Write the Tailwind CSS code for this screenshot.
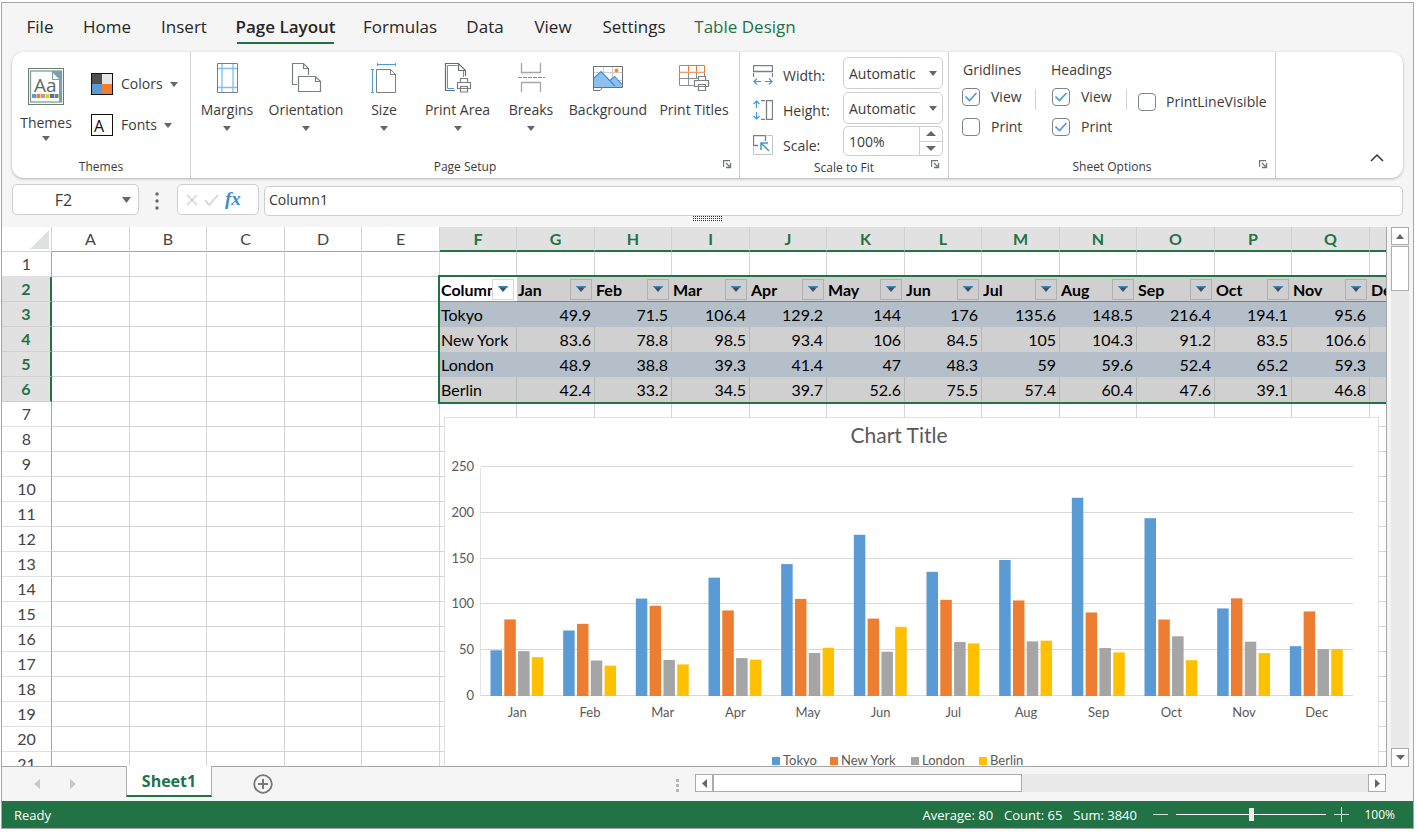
<!DOCTYPE html>
<html lang="en">
<head>
<meta charset="utf-8">
<title>Spreadsheet – Page Layout</title>
<script src="https://cdn.jsdelivr.net/npm/@tailwindcss/browser@4"></script>
</head>
<body class="bg-white font-['Open_Sans',sans-serif] text-[#3b3b3b]">
<div class="h-screen pt-0.5 pr-1 pb-[3px] pl-px">
<div class="flex h-full flex-col overflow-hidden border border-[#a6a6a6] bg-[#f5f5f5]">

  <!-- Ribbon tabs -->
  <nav class="flex h-[49px] shrink-0 items-start gap-[30px] pt-2 pl-[25px] text-[17px] leading-8 text-[#262626]">
    <button class="flex w-[26px] justify-center whitespace-nowrap">File</button>
    <button class="flex w-12 justify-center whitespace-nowrap">Home</button>
    <button class="flex w-[46px] justify-center whitespace-nowrap">Insert</button>
    <button class="flex h-[33px] w-[97px] justify-center border-b-2 border-[#217346] font-semibold whitespace-nowrap">Page Layout</button>
    <button class="flex w-[72px] justify-center whitespace-nowrap">Formulas</button>
    <button class="flex w-[38px] justify-center whitespace-nowrap">Data</button>
    <button class="flex w-[38px] justify-center whitespace-nowrap">View</button>
    <button class="flex w-[64px] justify-center whitespace-nowrap">Settings</button>
    <button class="flex w-[98px] justify-center whitespace-nowrap text-[#217346]">Table Design</button>
  </nav>

  <!-- Ribbon -->
  <div class="mr-[10px] ml-[10px] flex h-[126px] shrink-0 rounded-xl bg-white text-sm leading-5 shadow-[0_1px_3px_rgba(0,0,0,0.28)]">
    <!-- Themes -->
    <section class="flex w-[179px] shrink-0 flex-col border-r border-[#d2d2d2]">
      <div class="flex flex-1 pt-4 pl-1">
        <button class="flex w-[60px] flex-col items-center">
          <svg width="36" height="37" viewBox="0 0 36 37"><rect x=".5" y=".5" width="35" height="36" fill="#fff" stroke="#6f7b7b"/><rect x="2.500" y="3" width="31" height="31" fill="#fff" stroke="#7fa08c" stroke-width="1.300"/><path d="M24 3h10v31h-3V12h-7z" fill="#7d9db5"/><path d="M24.500 4v7.500H32z" fill="#fff" stroke="#7d9db5"/><text x="6" y="24" font-family="Open Sans" font-size="19" fill="#5c6666">Aa</text><path d="M4 26h4v4H4z" fill="#5b9bd5"/><path d="M8.500 26h4v4h-4z" fill="#ed7d31"/><path d="M13 26h4v4h-4z" fill="#a5a5a5"/><path d="M17.500 26h4v4h-4z" fill="#ffc000"/><path d="M22 26h4v4h-4z" fill="#4472c4"/><path d="M26.500 26h4v4h-4z" fill="#5f8f6f"/></svg>
          <span class="mt-2 whitespace-nowrap">Themes</span>
          <svg class="mt-[3px]" width="8" height="5"><path d="M0 0h8L4 5z" fill="#666"/></svg>
        </button>
        <div class="ml-[15px] flex flex-col gap-[17px] pt-1">
          <button class="flex h-6 items-center"><svg width="22" height="22"><path d="M1 1h10v10H1z" fill="#505050"/><path d="M11 1h10v10H11z" fill="#e7e6e6"/><path d="M1 11h10v10H1z" fill="#5b9bd5"/><path d="M11 11h10v10H11z" fill="#ed7d31"/><rect x=".5" y=".5" width="21" height="21" fill="none" stroke="#111"/></svg><span class="ml-2">Colors</span><svg class="ml-[7px]" width="8" height="5"><path d="M0 0h8L4 5z" fill="#666"/></svg></button>
          <button class="flex h-6 items-center"><svg width="22" height="22"><rect x=".5" y=".5" width="21" height="21" fill="#fff" stroke="#111"/><text x="3" y="18" font-family="Open Sans" font-size="16" fill="#111">A</text></svg><span class="ml-2">Fonts</span><svg class="ml-[7px]" width="8" height="5"><path d="M0 0h8L4 5z" fill="#666"/></svg></button>
        </div>
      </div>
      <h2 class="pb-px text-center text-xs leading-5">Themes</h2>
    </section>

    <!-- Page Setup -->
    <section class="flex w-[549px] shrink-0 flex-col border-r border-[#d2d2d2]">
      <div class="flex flex-1 pt-[10px] pl-[5px]">
        <button class="flex w-[62px] flex-col items-center">
          <svg width="32" height="32" fill="none"><path d="M6.500 1.500h20v29h-20z" stroke="#7a7f82"/><path d="M11 2v28M22 2v28M7 6.500h19M7 25.500h19" stroke="#7cc0ee" stroke-width="1.300"/></svg>
          <span class="mt-1.5 whitespace-nowrap">Margins</span><svg class="mt-1.5" width="8" height="5"><path d="M0 0h8L4 5z" fill="#666"/></svg>
        </button>
        <button class="flex w-24 flex-col items-center">
          <svg width="32" height="32" fill="none" stroke="#7a7f82" stroke-width="1.200"><path d="M7 22.500H2.500v-21h11l5 5V13M13.500 1.500v5h5"/><path d="M8.500 14.500h17l5 5v10h-22zM25.500 14.500v5h5"/></svg>
          <span class="mt-1.5 whitespace-nowrap">Orientation</span><svg class="mt-1.5" width="8" height="5"><path d="M0 0h8L4 5z" fill="#666"/></svg>
        </button>
        <button class="flex w-[60px] flex-col items-center">
          <svg width="32" height="32" fill="none"><path d="M8.500 7.500h14l5 5v18h-19zM22.500 7.500v5h5" stroke="#7a7f82"/><path d="M9 2.500h18M9.500 1v3M27.500 1v3M4.500 7v23M3 7.500h3M3 30.500h3" stroke="#4a9bdc"/></svg>
          <span class="mt-1.5 whitespace-nowrap">Size</span><svg class="mt-1.5" width="8" height="5"><path d="M0 0h8L4 5z" fill="#666"/></svg>
        </button>
        <button class="flex w-[87px] flex-col items-center">
          <svg width="32" height="32" fill="none"><path d="M13 28.500H3.500v-27h13l7 7V14M16.500 1.500v7h7" stroke="#666c70" stroke-width="1.200"/><path d="M12 26.500H5.500v-23h10M21.500 9v6" stroke="#4a9bdc"/><path d="M18.500 20v-3.500h7V20M15.500 20.500h13v6h-13zM18.500 24.500h7v5.500h-7z" fill="#fff" stroke="#7a7f82" stroke-width="1.200"/></svg>
          <span class="mt-1.5 whitespace-nowrap">Print Area</span><svg class="mt-1.5" width="8" height="5"><path d="M0 0h8L4 5z" fill="#666"/></svg>
        </button>
        <button class="flex w-[60px] flex-col items-center">
          <svg width="32" height="32" fill="none"><path d="M6.500 1v9.500h19V1M6.500 30v-9.500h19V30" stroke="#a6a6a6" stroke-width="1.300"/><path d="M3 15.500h27" stroke="#4a9bdc" stroke-dasharray="4 1"/></svg>
          <span class="mt-1.5 whitespace-nowrap">Breaks</span><svg class="mt-1.5" width="8" height="5"><path d="M0 0h8L4 5z" fill="#666"/></svg>
        </button>
        <button class="flex w-[94px] flex-col items-center">
          <svg width="32" height="32" fill="none"><path d="M11.500 4v20M20.500 4v20M2 10.500h28M2 18.500h28" stroke="#ccc"/><path d="M2 16l7-6.500 9 9 4-3.500 8 8.500v1.500H2z" fill="#8dc0ec"/><path d="M2 16l7-6.500L23 24M18 18.500l4.500-4 7.500 8" stroke="#3f8fd0" stroke-width="1.200"/><circle cx="24.500" cy="8.500" r="2" fill="#f58a1f"/><path d="M1.500 28.500v-24h29v21h-20l-2.500 3h-6.500z M1.500 25.500h9" stroke="#6b7075"/></svg>
          <span class="mt-1.5 whitespace-nowrap">Background</span>
        </button>
        <button class="flex w-[78px] flex-col items-center">
          <svg width="32" height="32" fill="none"><path d="M1.500 11v12.500h14M2 16.500h18M10.500 11v12M18.500 11v6M26.500 11v3" stroke="#8a8f92"/><path d="M1.500 3.500h25v7h-25zM10.500 3.500v7M18.500 3.500v7" stroke="#e8762c"/><path d="M2 10h24" stroke="#f5c6a4"/><path d="M20.500 18v-3.500h7V18M16.500 18.500h14v6h-14zM20.500 22.500h7v6h-7z" fill="#fff" stroke="#7a7f82" stroke-width="1.200"/></svg>
          <span class="mt-1.5 whitespace-nowrap">Print Titles</span>
        </button>
      </div>
      <div class="grid grid-cols-[1fr_auto_1fr] items-start pb-px">
        <span></span><h2 class="text-xs leading-5">Page Setup</h2>
        <button class="mt-[3px] mr-[7px] justify-self-end" aria-label="Page Setup options"><svg width="9" height="9" fill="none" stroke="#6c7575"><path d="M.5 7V.5H7M3 3l3.500 3.500M7.500 3v4.500H3" stroke-width="1.300"/></svg></button>
      </div>
    </section>

    <!-- Scale to Fit -->
    <section class="flex w-[209px] shrink-0 flex-col border-r border-[#d2d2d2]">
      <div class="flex flex-1 flex-col gap-[3px] pt-[5px] pl-[13px]">
        <div class="flex h-8 items-center">
          <svg class="mt-1" width="20" height="20" fill="none"><path d="M.5.500h19v6H.5zM.5 8v4M19.500 8v4" stroke="#7a7f82" stroke-width="1.300"/><path d="M1 16.500h7M4 13.500l-3 3 3 3M12 16.500h7M16 13.500l3 3-3 3" stroke="#3f97dc" stroke-width="1.200"/></svg>
          <label for="w" class="mt-1.5 ml-[10px] w-[60px]">Width:</label>
          <span class="relative"><select id="w" class="h-8 w-[100px] appearance-none rounded-[5px] border border-[#cfcfcf] bg-white pt-px pl-[5px]"><option>Automatic</option></select><svg class="pointer-events-none absolute top-3.5 right-1.5" width="8" height="5"><path d="M0 0h8L4 5z" fill="#666"/></svg></span>
        </div>
        <div class="flex h-8 items-center">
          <svg class="mt-1" width="20" height="20" fill="none"><path d="M13.500.500h6v19h-6zM8 .500h4M8 19.500h4" stroke="#7a7f82" stroke-width="1.300"/><path d="M3.500 1v7M.5 4l3-3 3 3M3.500 12v7M.5 16l3 3 3-3" stroke="#3f97dc" stroke-width="1.200"/></svg>
          <label for="h" class="mt-1.5 ml-[10px] w-[60px]">Height:</label>
          <span class="relative"><select id="h" class="h-8 w-[100px] appearance-none rounded-[5px] border border-[#cfcfcf] bg-white pt-px pl-[5px]"><option>Automatic</option></select><svg class="pointer-events-none absolute top-3.5 right-1.5" width="8" height="5"><path d="M0 0h8L4 5z" fill="#666"/></svg></span>
        </div>
        <div class="flex items-center">
          <svg class="mt-1.5" width="20" height="20" fill="none"><path d="M5 10.500H.5V.500h12V6" stroke="#7a7f82" stroke-width="1.300"/><path d="M.5 12v7.500h19V.500H14" stroke="#c4c4c4"/><path d="M16 16L8 8M8 15V8h7" stroke="#3f97dc" stroke-width="1.500"/></svg>
          <label for="s" class="mt-2 ml-[10px] w-[60px]">Scale:</label>
          <div class="-mt-px flex h-[30px] w-[100px] rounded-[5px] border border-[#cfcfcf]">
            <input id="s" value="100%" class="w-[75px] min-w-0 rounded-[5px] pt-0.5 pl-[5px] outline-none">
            <div class="flex flex-1 flex-col border-l border-[#cfcfcf]">
              <button class="flex flex-1 items-center justify-center border-b border-[#cfcfcf]" aria-label="Increase"><svg width="10" height="5"><path d="M0 5h10L5 0z" fill="#666"/></svg></button>
              <button class="flex flex-1 items-center justify-center" aria-label="Decrease"><svg width="10" height="5"><path d="M0 0h10L5 5z" fill="#666"/></svg></button>
            </div>
          </div>
        </div>
      </div>
      <div class="grid grid-cols-[1fr_auto_1fr] items-start">
        <span></span><h2 class="text-xs leading-5">Scale to Fit</h2>
        <button class="mt-0.5 mr-2 justify-self-end" aria-label="Scale to Fit options"><svg width="9" height="9" fill="none" stroke="#6c7575"><path d="M.5 7V.5H7M3 3l3.500 3.500M7.500 3v4.500H3" stroke-width="1.300"/></svg></button>
      </div>
    </section>

    <!-- Sheet Options -->
    <section class="flex w-[327px] shrink-0 flex-col border-r border-[#d2d2d2]">
      <div class="flex flex-1 pt-2 pl-[13px]">
        <fieldset class="w-[73px]"><legend class="pl-px">Gridlines</legend>
          <label class="mt-[7px] flex h-5 items-center gap-[11px]"><span class="relative flex"><input type="checkbox" checked class="peer size-[18px] appearance-none rounded border-[1.5px] border-[#7d8484] bg-white"><svg class="pointer-events-none absolute inset-0 hidden peer-checked:block" width="18" height="18" fill="none"><path d="M3.500 8.500l4 4 7-7.500" stroke="#4a96d6" stroke-width="1.600"/></svg></span>View</label>
          <label class="mt-[10px] flex h-5 items-center gap-[11px]"><input type="checkbox" class="size-[18px] appearance-none rounded border-[1.5px] border-[#7d8484] bg-white">Print</label>
        </fieldset>
        <div class="mt-[29px] h-[21px] w-px bg-[#d2d2d2]"></div>
        <fieldset class="ml-[15px] w-[75px]"><legend>Headings</legend>
          <label class="mt-[7px] flex h-5 items-center gap-[11px] pl-px"><span class="relative flex"><input type="checkbox" checked class="peer size-[18px] appearance-none rounded border-[1.5px] border-[#7d8484] bg-white"><svg class="pointer-events-none absolute inset-0 hidden peer-checked:block" width="18" height="18" fill="none"><path d="M3.500 8.500l4 4 7-7.500" stroke="#4a96d6" stroke-width="1.600"/></svg></span>View</label>
          <label class="mt-[10px] flex h-5 items-center gap-[11px] pl-px"><span class="relative flex"><input type="checkbox" checked class="peer size-[18px] appearance-none rounded border-[1.5px] border-[#7d8484] bg-white"><svg class="pointer-events-none absolute inset-0 hidden peer-checked:block" width="18" height="18" fill="none"><path d="M3.500 8.500l4 4 7-7.500" stroke="#4a96d6" stroke-width="1.600"/></svg></span>Print</label>
        </fieldset>
        <div class="mt-[29px] h-[21px] w-px bg-[#d2d2d2]"></div>
        <label class="mt-8 ml-[11px] flex h-5 items-center gap-[10px] whitespace-nowrap"><input type="checkbox" class="size-[18px] shrink-0 appearance-none rounded border-[1.5px] border-[#7d8484] bg-white">PrintLineVisible</label>
      </div>
      <div class="grid grid-cols-[1fr_auto_1fr] items-start pb-px">
        <span></span><h2 class="text-xs leading-5">Sheet Options</h2>
        <button class="mt-[3px] mr-[7px] justify-self-end" aria-label="Sheet options"><svg width="9" height="9" fill="none" stroke="#6c7575"><path d="M.5 7V.5H7M3 3l3.500 3.500M7.500 3v4.500H3" stroke-width="1.300"/></svg></button>
      </div>
    </section>
    <button class="mr-[19px] mb-4 ml-auto self-end" aria-label="Collapse ribbon"><svg width="14" height="9" fill="none"><path d="M1 8l6-6 6 6" stroke="#333" stroke-width="1.500"/></svg></button>
  </div>

  <!-- Formula bar -->
  <div class="flex h-[38px] shrink-0 items-start pt-1.5 pr-[10px] pl-[10px]">
    <div class="relative"><input aria-label="Name box" value="F2" class="block h-[31px] w-[127px] rounded-[5px] border border-[#cfcfcf] bg-white pt-px pr-6 text-center text-base outline-none"><svg class="absolute top-[13px] right-2" width="9" height="6"><path d="M0 0h9L4.500 6z" fill="#666"/></svg></div>
    <svg class="mt-2 ml-4" width="4" height="18" fill="#666"><circle cx="2" cy="2" r="1.700"/><circle cx="2" cy="9" r="1.700"/><circle cx="2" cy="16" r="1.700"/></svg>
    <div class="ml-[18px] flex h-[31px] w-[82px] items-center rounded-[5px] border border-[#cfcfcf] bg-white pl-2">
      <button aria-label="Cancel"><svg width="12" height="12"><path d="M1 1l10 10M11 1L1 11" stroke="#d4d4d4" stroke-width="1.500"/></svg></button>
      <button class="ml-[6px]" aria-label="Enter"><svg width="15" height="12" fill="none"><path d="M1 6l4 5 9-10" stroke="#d4d4d4" stroke-width="1.800"/></svg></button>
      <button class="ml-1.5 pb-0.5 font-['Liberation_Serif',serif] text-[19px] leading-6 font-bold text-[#3f8ccb] italic">fx</button>
    </div>
    <input aria-label="Formula" value="Column1" class="mt-0.5 ml-[5px] h-[30px] min-w-0 flex-1 rounded-[5px] border border-[#cfcfcf] bg-white pb-1 pl-1 text-sm text-[#333] outline-none">
  </div>
  <div class="flex h-[11px] shrink-0 justify-center"><svg width="30" height="5"><path d="M0 .5h30M0 2.500h30M0 4.500h30" stroke="#333" stroke-dasharray="1 1"/></svg></div>

  <!-- Sheet area -->
  <div class="flex min-h-0 flex-1 font-[Lato,sans-serif]">
    <main class="relative min-w-0 flex-1 overflow-hidden border-r border-b border-[#a6a6a6] bg-white">
      <table id="grid" class="w-[1445px] table-fixed border-separate border-spacing-0 text-base leading-6 text-black"></table>
      <div class="absolute top-12 left-[436px] h-[129px] w-[1000px] border-2 border-[#217346]"></div>
      <figure class="absolute top-[190px] left-[442px] w-[935px] border border-[#e0e0e0] bg-white">
        <svg id="chart" class="block" width="933" height="380" font-family="Lato, sans-serif" font-size="13" fill="#595959"></svg>
      </figure>
    </main>
    <div class="mr-1 ml-1 flex w-[18px] flex-col bg-[#e9e9e9]">
      <button class="flex h-[18px] items-center justify-center border border-[#ababab] bg-white" aria-label="Scroll up"><svg width="8" height="5"><path d="M0 5h8L4 0z" fill="#666"/></svg></button>
      <div class="mt-px h-[45px] border border-[#ababab] bg-white"></div>
      <button class="mt-auto flex h-[19px] items-center justify-center border border-[#ababab] bg-white" aria-label="Scroll down"><svg width="9" height="5"><path d="M0 0h9L4.500 5z" fill="#666"/></svg></button>
    </div>
  </div>

  <!-- Sheet tabs and horizontal scrollbar -->
  <div class="flex h-[34px] shrink-0 items-start pr-[27px] pl-[32px]">
    <button class="mt-3" aria-label="Previous sheet"><svg width="6" height="10"><path d="M6 0v10L0 5z" fill="#c8c8c8"/></svg></button>
    <button class="mt-3 ml-[30px]" aria-label="Next sheet"><svg width="6" height="10"><path d="M0 0v10l6-5z" fill="#c8c8c8"/></svg></button>
    <button class="relative -mt-px ml-[50px] h-[31px] w-[86px] border-x border-b-2 border-x-[#ababab] border-b-[#217346] bg-white font-['Open_Sans',sans-serif] text-base leading-7 font-bold text-[#217346]">Sheet1</button>
    <button class="mt-[7px] ml-[41px]" aria-label="New sheet"><svg width="20" height="20" fill="none" stroke="#777" stroke-width="1.800"><circle cx="10" cy="10" r="8.800"/><path d="M10 5v10M5 10h10" stroke-width="2"/></svg></button>
    <svg class="mt-3 ml-auto" width="3" height="13" fill="#b5b5b5"><path d="M0 0h3v3H0zM0 5h3v3H0zM0 10h3v3H0z"/></svg>
    <div class="mt-[7px] ml-[16px] flex h-[18px] w-[691px] bg-[#e9e9e9]">
      <button class="flex w-[18px] items-center justify-center border border-[#ababab] bg-white" aria-label="Scroll left"><svg width="5" height="9"><path d="M5 0v9L0 4.500z" fill="#666"/></svg></button>
      <div class="w-[309px] border border-[#ababab] bg-white"></div>
      <button class="ml-auto flex w-[18px] items-center justify-center border border-[#ababab] bg-white" aria-label="Scroll right"><svg width="5" height="9"><path d="M0 0v9l5-4.500z" fill="#666"/></svg></button>
    </div>
  </div>

  <!-- Status bar -->
  <footer class="flex h-[27px] shrink-0 items-center bg-[#217346] pr-[18px] pl-3 text-[13px] leading-6 text-white">
    <span class="mr-auto">Ready</span>
    <span>Average: 80</span><span class="ml-[11px]">Count: 65</span><span class="ml-[11px]">Sum: 3840</span>
    <button class="ml-4" aria-label="Zoom out"><svg width="15" height="15"><path d="M0 7.500h15" stroke="#cfe0d6"/></svg></button>
    <input type="range" aria-label="Zoom" class="ml-2 h-3.5 w-[150px] appearance-none bg-[linear-gradient(white,white)] bg-[length:100%_1px] bg-center bg-no-repeat [&::-webkit-slider-thumb]:h-[13px] [&::-webkit-slider-thumb]:w-[5px] [&::-webkit-slider-thumb]:appearance-none [&::-webkit-slider-thumb]:bg-[#eee]">
    <button class="ml-2" aria-label="Zoom in"><svg width="15" height="15"><path d="M0 7.500h15M7.500 0v15" stroke="#cfe0d6"/></svg></button>
    <span class="ml-[14px] w-8 text-right text-xs leading-6">100%</span>
  </footer>
</div>
</div>

<script>
const months = ['Jan','Feb','Mar','Apr','May','Jun','Jul','Aug','Sep','Oct','Nov','Dec'];
const data = [
  ['Tokyo', '#5b9bd5', [49.9,71.5,106.4,129.2,144,176,135.6,148.5,216.4,194.1,95.6,54.4]],
  ['New York', '#ed7d31', [83.6,78.8,98.5,93.4,106,84.5,105,104.3,91.2,83.5,106.6,92.3]],
  ['London', '#a5a5a5', [48.9,38.8,39.3,41.4,47,48.3,59,59.6,52.4,65.2,59.3,51.2]],
  ['Berlin', '#ffc000', [42.4,33.2,34.5,39.7,52.6,75.5,57.4,60.4,47.6,39.1,46.8,51.1]]
];
const letters = 'ABCDEFGHIJKLMNOPQR'.split('');

let html = '<colgroup><col class="w-[50px]">' + letters.map((l, i) => i % 2 ? '<col class="w-[77px]">' : '<col class="w-[78px]">').join('') + '</colgroup><thead><tr>';
html += '<th class="h-[25px] border-r border-b border-[#d4d4d4] p-0"><svg class="ml-auto mr-0.5" width="19" height="19"><path d="M19 0v19H0z" fill="#dfe1e1"/></svg></th>';
letters.forEach((l, i) => {
  html += i < 5
    ? '<th scope="col" class="h-[25px] border-r border-b border-r-[#d4d4d4] border-b-[#a6a6a6] p-0 font-normal text-[#444]">' + l + '</th>'
    : '<th scope="col" class="h-[25px] border-r border-b-2 border-r-[#d0d0d0] border-b-[#217346] bg-[#e1e1e1] p-0 font-bold leading-[23px] text-[#217346]">' + l + '</th>';
});
html += '</tr></thead><tbody>';
for (let r = 1; r <= 22; r++) {
  const sel = r >= 2 && r <= 6;
  html += '<tr>' + (sel
    ? '<th scope="row" class="h-[25px] border-r-2 border-b border-r-[#217346] border-b-[#d0d0d0] bg-[#e1e1e1] p-0 font-bold text-[#217346]">' + r + '</th>'
    : '<th scope="row" class="h-[25px] border-r border-b border-r-[#a6a6a6] border-b-[#e0e0e0] p-0 font-normal text-[#444]">' + r + '</th>');
  letters.forEach((l, i) => {
    const c = i - 5;
    if (!sel || c < 0) { html += '<td class="h-[25px] border-r border-b border-[#d4d4d4] p-0"></td>'; return; }
    if (r === 2) {
      const name = c ? months[c - 1] : 'Column1';
      html += (c ? '<td class="h-[25px] border-b border-[#5b86ad] bg-[#d0d0d0] p-0 pl-px font-bold">' : '<td class="h-[25px] border-b border-[#5b9bd5] bg-white p-0 pl-px font-bold">')
        + '<div class="flex h-6 items-center overflow-hidden"><span class="min-w-0 flex-1 overflow-hidden pt-px leading-[23px] whitespace-nowrap">' + name + '</span>'
        + (c ? '<button class="mr-[3px] flex h-[21px] w-[22px] shrink-0 items-center justify-center border border-[#b0b0b0] bg-[#cfcfcf]" aria-label="Filter">' : '<button class="mr-[3px] flex h-[21px] w-[22px] shrink-0 items-center justify-center border border-[#d8d8d8] bg-white" aria-label="Filter">')
        + '<svg width="10" height="6"><path d="M0 0h10L5 6z" fill="#3d4f60"/><path d="M0 0h10v1.500H1z" fill="#3f86c4"/></svg></button></div></td>';
      return;
    }
    const row = data[r - 3], v = c ? row[2][c - 1] : row[0], blue = r % 2;
    html += (c
      ? (blue ? '<td class="h-[25px] border-r border-b border-[#b4bfc9] bg-[#b4bfc9] p-0 pt-px pr-[3px] text-right leading-[23px]">' : '<td class="h-[25px] border-r border-b border-r-[#b3b8bb] border-b-[#d0d0d0] bg-[#d0d0d0] p-0 pt-px pr-[3px] text-right leading-[23px]">')
      : (blue ? '<td class="h-[25px] border-r border-b border-[#b4bfc9] bg-[#b4bfc9] p-0 pt-px pl-px leading-[23px] whitespace-nowrap">' : '<td class="h-[25px] border-r border-b border-r-[#b3b8bb] border-b-[#d0d0d0] bg-[#d0d0d0] p-0 pt-px pl-px leading-[23px] whitespace-nowrap">')) + v + '</td>';
  });
  html += '</tr>';
}
document.getElementById('grid').innerHTML = html + '</tbody>';

// Clustered column chart
const X0 = 36, Y0 = 278, W = 872, H = 229;
let s = '<text x="454" y="25" text-anchor="middle" font-size="21">Chart Title</text>';
for (let v = 0; v <= 250; v += 50) {
  const y = Math.round(Y0 - v / 250 * H) - 0.5;
  s += '<path d="M' + X0 + ' ' + y + 'h' + W + '" stroke="#d9d9d9"/><text x="' + (X0 - 7) + '" y="' + (y + 4) + '" text-anchor="end">' + v + '</text>';
}
s += '<path d="M' + (X0 - 0.5) + ' ' + (Y0 - H) + 'v' + H + '" stroke="#e3e3e3"/>';
months.forEach((m, i) => {
  const cx = X0 + i * W / 12;
  data.forEach((d, k) => {
    const h = d[2][i] / 250 * H;
    s += '<rect x="' + (cx + 9.5 + k * 13.8) + '" y="' + (Y0 - h) + '" width="11.500" height="' + h + '" fill="' + d[1] + '"/>';
  });
  s += '<text x="' + (cx + W / 24) + '" y="299" text-anchor="middle">' + m + '</text>';
});
[[327, 0], [385, 1], [466, 2], [534, 3]].forEach(([x, k]) => {
  s += '<rect x="' + x + '" y="339" width="8" height="8" fill="' + data[k][1] + '"/><text x="' + (x + 11) + '" y="347">' + data[k][0] + '</text>';
});
document.getElementById('chart').innerHTML = s;
</script>
</body>
</html>
